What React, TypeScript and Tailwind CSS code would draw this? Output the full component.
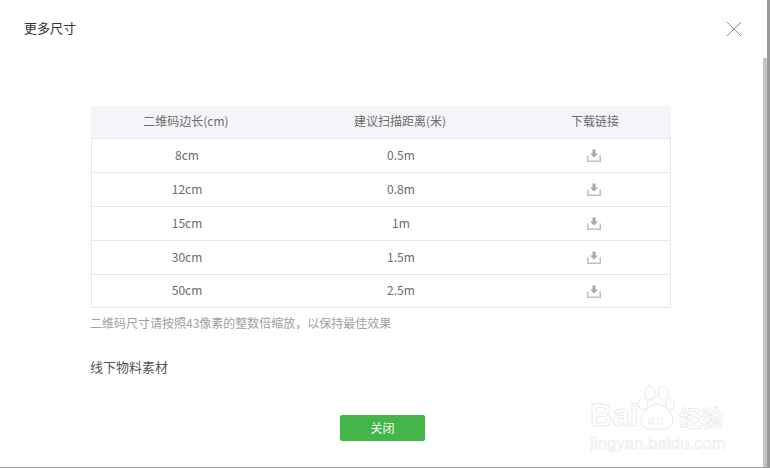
const rows = [
  ['8cm', '0.5m'],
  ['12cm', '0.8m'],
  ['15cm', '1m'],
  ['30cm', '1.5m'],
  ['50cm', '2.5m'],
];

function DownloadIcon() {
  return (
    <svg width="14" height="13" viewBox="0 0 14 13" fill="none">
      <path d="M5.5 0.5h3v4h2.5L7 8.5 3 4.5h2.5z" fill="#a8a8a8" />
      <path d="M0.75 6.5v5.75h12.5V6.5" stroke="#c0c0c0" strokeWidth="1.5" />
    </svg>
  );
}

function Watermark() {
  return (
    <div className="absolute left-[590px] top-[385px] w-[140px] text-transparent [-webkit-text-stroke:1px_#ececec] font-['Liberation_Sans',sans-serif]">
      <div className="flex h-[46px] items-end">
        <span className="text-[31px] leading-[31px] font-bold">Bai</span>
        <svg width="40" height="46" viewBox="0 0 40 46" className="ml-[-1px] shrink-0" fill="none" stroke="#e6e6e6">
          <ellipse cx="13" cy="8" rx="5" ry="7" />
          <ellipse cx="26" cy="8" rx="5" ry="7" />
          <ellipse cx="6" cy="19" rx="4.5" ry="6" />
          <ellipse cx="33" cy="19" rx="4.5" ry="6" />
          <path d="M20 19c-7 0-16 9-16 16 0 7 5 9 9 9h14c4 0 9-2 9-9 0-7-9-16-16-16z" />
          <path d="M16 30v9h-4v-5h4M21 33v6h4v-6" />
        </svg>
        <span className="ml-[2px] shrink-0 text-[22px] leading-[29px] font-bold font-['Noto_Sans_CJK_SC',sans-serif] [-webkit-text-stroke:0.7px_#e8e8e8]">经验</span>
      </div>
      <div className="mt-[3px] whitespace-nowrap text-[16px] leading-[20px] tracking-[0.4px] [-webkit-text-stroke:0.7px_#ececec]">jingyan.baidu.com</div>
    </div>
  );
}

export default function App() {
  return (
    <div className="relative h-[468px] w-[770px] overflow-hidden bg-white font-['Noto_Sans_CJK_SC','Liberation_Sans',sans-serif]">
      <div className="flex h-[467px] w-[767px] flex-col">
        <div className="flex h-[106px] items-start justify-between pl-[24px] pr-[25px] pt-[18px]">
          <h2 className="text-[13px] leading-[20px] font-normal text-[#333]">更多尺寸</h2>
          <svg width="16" height="16" viewBox="0 0 16 16" className="mt-[3px]" stroke="#8c8c8c" strokeWidth="1">
            <path d="M1 1l14 14M15 1L1 15" />
          </svg>
        </div>
        <div className="ml-[91px] w-[580px] border-b border-[#e7e7eb] text-[12px] text-[#6b6b6b]">
          <div className="grid h-[33px] grid-cols-[190px_238px_152px] items-center border-b border-[#e7e7eb] bg-[#f4f5f9] pb-[2px]">
            <div className="text-center">二维码边长(cm)</div>
            <div className="text-center">建议扫描距离(米)</div>
            <div className="text-center">下载链接</div>
          </div>
          {rows.map(([size, dist], i) => (
            <div
              key={size}
              className={`grid grid-cols-[190px_238px_152px] items-center border-x border-[#e7e7eb] pb-[2px] ${i < rows.length - 1 ? 'h-[34px] border-b' : 'h-[32px]'}`}
            >
              <div className="text-center">{size}</div>
              <div className="text-center">{dist}</div>
              <div className="flex justify-center pr-[4px] pt-[2px]"><DownloadIcon /></div>
            </div>
          ))}
        </div>
        <p className="ml-[90px] mt-[6px] text-[12px] leading-[18px] text-[#a0a0a0]">二维码尺寸请按照43像素的整数倍缩放，以保持最佳效果</p>
        <p className="ml-[90px] mt-[25px] text-[13px] leading-[20px] text-[#555]">线下物料素材</p>
        <div className="ml-[340px] mt-[37px]">
          <button className="h-[26px] w-[85px] rounded-[2px] bg-[#44b549] text-[12px] text-white">关闭</button>
        </div>
      </div>
      <div className="absolute left-[763px] top-[58px] h-[409px] w-[4px] bg-[#c4c4c4]" />
      <div className="absolute right-0 top-0 h-[468px] w-[3px] bg-[#999]" />
      <div className="absolute bottom-0 left-0 h-[1px] w-[770px] bg-[#999]" />
      <Watermark />
    </div>
  );
}
